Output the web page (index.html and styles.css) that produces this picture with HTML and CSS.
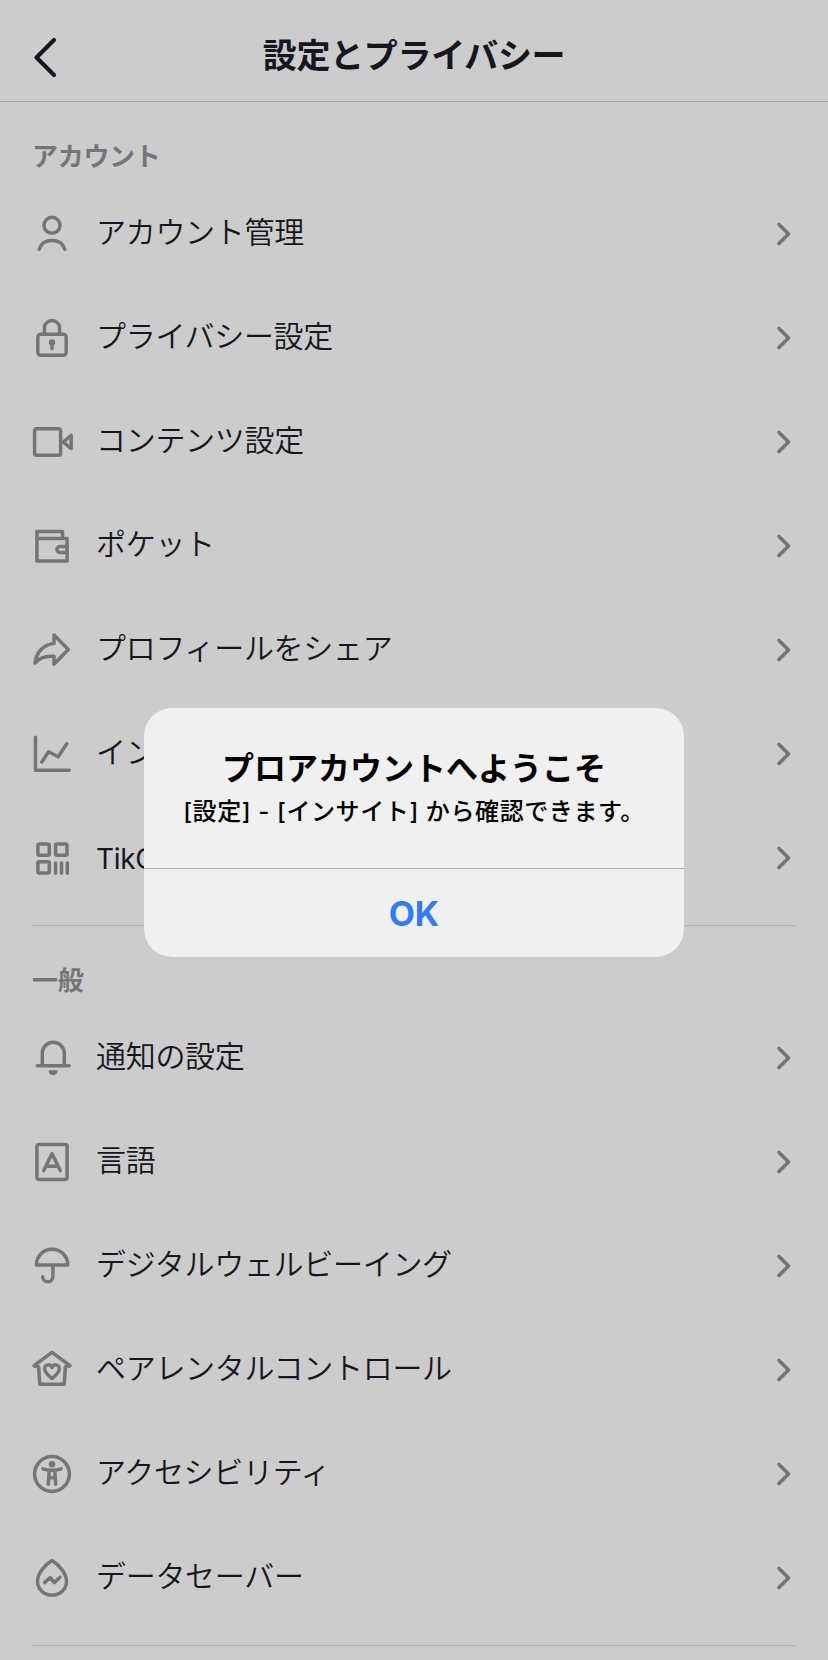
FILE: index.html
```
<!DOCTYPE html>
<html lang="ja">
<head>
    <meta charset="UTF-8">
    <meta name="viewport" content="width=device-width, initial-scale=1.0">
    <title>設定とプライバシー</title>
    <link rel="stylesheet" href="styles.css">
</head>
<body>

    <svg class="symbols">
        <symbol id="chevron" viewBox="0 0 16 26"><path d="M3 3.5 12.5 13 3 22.5"/></symbol>
    </svg>

    <header class="header">
        <svg class="back" viewBox="0 0 28 44"><path d="M23 5 5.5 22.5 23 40"/></svg>
        <h1>設定とプライバシー</h1>
    </header>

    <main>
        <section class="section">
            <h2>アカウント</h2>
            <div class="row">
                <svg class="icon" viewBox="0 0 44 44"><circle cx="22" cy="13.3" r="8"/><path d="M9.2 37.3C11 31.5 16 28.6 22 28.6s11 2.9 12.8 8.7"/></svg>
                <span>アカウント管理</span>
                <svg class="chevron"><use href="#chevron"/></svg>
            </div>
            <div class="row">
                <svg class="icon" viewBox="0 0 44 44"><rect x="7.8" y="18.3" width="28.4" height="21" rx="3"/><path d="M14.4 18v-6a7.6 7.6 0 0 1 15.2 0v6"/><circle class="fill" cx="22" cy="26.4" r="3.2"/><path d="M22 27v5.4"/></svg>
                <span>プライバシー設定</span>
                <svg class="chevron"><use href="#chevron"/></svg>
            </div>
            <div class="row">
                <svg class="icon" viewBox="0 0 44 44"><rect x="4.6" y="8.8" width="26" height="26.4" rx="2"/><path d="M41.2 15.4v13.2L33.2 22z"/></svg>
                <span>コンテンツ設定</span>
                <svg class="chevron"><use href="#chevron"/></svg>
            </div>
            <div class="row">
                <svg class="icon" viewBox="0 0 44 44"><path d="M6.9 14.4h30.2v22.7H6.9zV7.6h25.6v6.8"/><path d="M37.1 22.4H30a3 3 0 0 0 0 6h7.1"/></svg>
                <span>ポケット</span>
                <svg class="chevron"><use href="#chevron"/></svg>
            </div>
            <div class="row">
                <svg class="icon" viewBox="0 0 44 44"><path d="M24 7 38.3 21.5 24 36.3v-8C16.5 27.5 9.5 30 4.9 35 6.5 24 13.5 16.5 24 15.5z"/></svg>
                <span>プロフィールをシェア</span>
                <svg class="chevron"><use href="#chevron"/></svg>
            </div>
            <div class="row">
                <svg class="icon" viewBox="0 0 44 44"><path d="M5.5 5.2v33h33.7"/><path d="M11.8 30 18.7 19.7l9.5 5.1 8.6-13.1"/></svg>
                <span>インサイト</span>
                <svg class="chevron"><use href="#chevron"/></svg>
            </div>
            <div class="row">
                <svg class="icon" viewBox="0 0 44 44"><rect x="7.9" y="7.9" width="11.4" height="11.4" rx="1.5"/><rect x="25.6" y="7.9" width="11.4" height="11.4" rx="1.5"/><rect x="7.9" y="25.7" width="11.4" height="11.4" rx="1.5"/><path d="M25.6 27v10.3M31.5 27v10.3M37.3 27v10.3"/></svg>
                <span class="latin">TikCode</span>
                <svg class="chevron"><use href="#chevron"/></svg>
            </div>
        </section>

        <section class="section">
            <h2>一般</h2>
            <div class="row">
                <svg class="icon" viewBox="0 0 44 44"><path d="M7.3 29.7h31.8M12.3 29.4V17.2a11 11 0 0 1 22 0v12.2"/><path class="fill" d="M19.4 34.300h7.400q1 0 .8 1.100c-1.200 5.100-7.800 5.100-9 0q-.2-1.100.8-1.100z"/></svg>
                <span>通知の設定</span>
                <svg class="chevron"><use href="#chevron"/></svg>
            </div>
            <div class="row">
                <svg class="icon" viewBox="0 0 44 44"><rect x="6.9" y="4.6" width="30.2" height="34.8" rx="1.8"/><path d="M13.7 30.6 22 13.7l8.3 16.9M16.3 26.2h11.4"/></svg>
                <span>言語</span>
                <svg class="chevron"><use href="#chevron"/></svg>
            </div>
            <div class="row">
                <svg class="icon" viewBox="0 0 44 44"><path d="M6.4 20.9a15.7 15.7 0 0 1 31.4 0z"/><path d="M22.9 21v11.7a5.1 5.1 0 0 1-10.2 0"/></svg>
                <span>デジタルウェルビーイング</span>
                <svg class="chevron"><use href="#chevron"/></svg>
            </div>
            <div class="row">
                <svg class="icon" viewBox="0 0 44 44"><path d="M22 4.4 4 17.7l4.6 1.2 1.2 17.3h24.4l1.2-17.3L40 17.7z"/><path d="M22 30.6C17.5 27 14.7 24.5 14.7 21c0-5 5.5-5.5 7.3-1.5 1.8-4 7.3-3.5 7.3 1.5 0 3.500-2.800 6-7.300 9.600z"/></svg>
                <span>ペアレンタルコントロール</span>
                <svg class="chevron"><use href="#chevron"/></svg>
            </div>
            <div class="row">
                <svg class="icon" viewBox="0 0 44 44"><circle cx="22" cy="22" r="17.4"/><circle class="fill" cx="22" cy="12.2" r="3.3"/><path d="M13 16.8c6 1.900 12 1.900 18 0M19.200 18.500l-.9 13.800M24.800 18.500l.9 13.800M19 25.800h6"/></svg>
                <span>アクセシビリティ</span>
                <svg class="chevron"><use href="#chevron"/></svg>
            </div>
            <div class="row">
                <svg class="icon" viewBox="0 0 44 44"><path d="M22 4.600C17 7.500 7.500 16.500 7.500 25.200c0 8 6.500 13.900 14.500 13.900s14.500-5.900 14.500-13.900C36.500 16.500 27 7.500 22 4.600z"/><path d="M14.600 26.600 20.300 21.500 24.200 26.600 30 21.300"/></svg>
                <span>データセーバー</span>
                <svg class="chevron"><use href="#chevron"/></svg>
            </div>
        </section>
    </main>

    <div class="dialog">
        <div class="dialog-body">
            <h3>プロアカウントへようこそ</h3>
            <p>[設定] - [インサイト] から確認できます。</p>
        </div>
        <button>OK</button>
    </div>

</body>
</html>
```
FILE: styles.css
```
* {
    box-sizing: border-box;
}
body {
    margin: 0;
    height: 1660px;
    overflow: hidden;
    background-color: #ccc;
    color: #161620;
    font-family: "Noto Sans CJK JP", sans-serif;
}
h1, h2, h3, p {
    margin: 0;
}
svg {
    fill: none;
    stroke: #757577;
    stroke-width: 3.5;
    stroke-linecap: round;
    stroke-linejoin: round;
}
.symbols {
    display: none;
}
.header {
    display: grid;
    grid-template-columns: 80px 1fr 80px;
    align-items: center;
    height: 102px;
    border-bottom: 1px solid #a2a2a2;
}
.header h1 {
    padding-top: 7px;
    text-align: center;
    font-size: 34px;
    line-height: 80px;
    letter-spacing: -0.3px;
}
.back {
    width: 28px;
    height: 44px;
    margin: 13px 0 0 31px;
    stroke: #161620;
    stroke-width: 4.2;
}
.section {
    padding-bottom: 15px;
    margin: 0 32px;
    border-bottom: 1px solid #b3b3b3;
}
.section h2 {
    height: 80px;
    line-height: 106px;
    font-size: 26px;
    font-weight: 700;
    color: #757577;
    letter-spacing: -0.3px;
}
.row {
    display: flex;
    align-items: center;
    height: 104px;
}
.icon {
    width: 44px;
    height: 44px;
    margin: 0 22px 0 -2px;
}
.icon .fill {
    fill: #757577;
    stroke: none;
}
.row span {
    flex: 1;
    padding-bottom: 8px;
    font-size: 30px;
    font-weight: 350;
    line-height: 44px;
    letter-spacing: -0.3px;
}
.row .latin {
    padding: 1px 0 0;
    font-family: Inter, sans-serif;
    font-size: 28px;
    font-weight: 400;
}
.chevron {
    width: 16px;
    height: 26px;
    margin-right: 4px;
    stroke-width: 3.6;
}
/* Aviso encima de la lista */
.dialog {
    position: absolute;
    top: 708px;
    left: 144px;
    width: 540px;
    height: 249px;
    border-radius: 28px;
    background-color: #f0f0f0;
    color: #000;
    text-align: center;
    overflow: hidden;
}
.dialog-body {
    height: 161px;
    padding-top: 36px;
    border-bottom: 1px solid #adadad;
}
.dialog h3 {
    font-size: 32px;
    line-height: 44px;
}
.dialog p {
    padding-top: 3px;
    font-family: Inter, "Noto Sans CJK JP", sans-serif;
    font-size: 24px;
    font-weight: 500;
    line-height: 42px;
    letter-spacing: 0.6px;
}
.dialog button {
    width: 100%;
    height: 88px;
    padding: 0;
    border: none;
    background: none;
    color: #347bf6;
    font-family: Inter, sans-serif;
    font-size: 34px;
    font-weight: 700;
}
```
